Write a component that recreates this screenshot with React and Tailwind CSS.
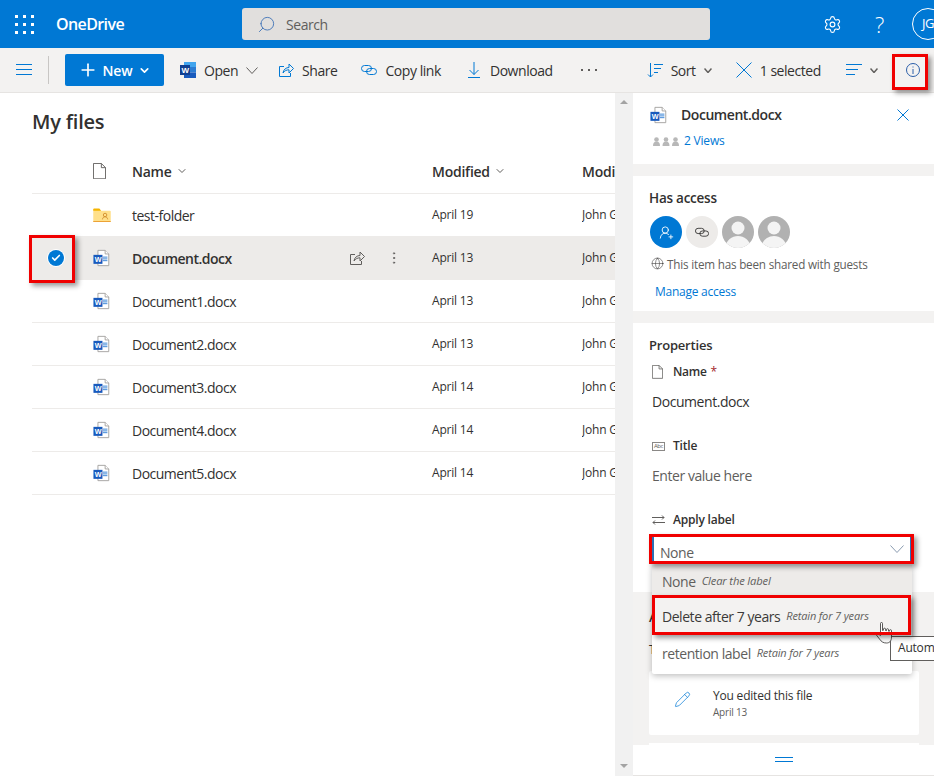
import React from "react";
import { ChevronDown, Plus, Settings, Search, Pencil, Globe, MoreVertical, UserRoundPlus, Check } from "lucide-react";

const WordIcon = ({ className = "" }) => (
  <svg width="18" height="18" viewBox="0 0 20 20" className={className}>
    <path d="M5.500 1.500h8l4 4v13h-12z" fill="#fff" stroke="#a19f9d" />
    <path d="M13.500 1.500v4h4" fill="#fff" stroke="#a19f9d" />
    <rect x="11" y="8.500" width="5" height="1" fill="#2b7cd3" />
    <rect x="11" y="10.500" width="5" height="1" fill="#2b7cd3" />
    <rect x="11" y="12.500" width="5" height="1" fill="#2b7cd3" />
    <rect x="0.500" y="6.500" width="10" height="10" fill="#185abd" />
    <text x="5.500" y="14.500" textAnchor="middle" fontSize="8" fontWeight="700" fill="#fff" fontFamily="Liberation Sans">W</text>
  </svg>
);

const WordLogo = ({ className = "" }) => (
  <svg width="16" height="16" viewBox="0 0 16 16" className={className}>
    <rect x="4" y="0" width="12" height="5" fill="#41a5ee" />
    <rect x="4" y="5" width="12" height="5.500" fill="#2b7cd3" />
    <rect x="4" y="10.500" width="12" height="5.500" fill="#185abd" />
    <rect x="0" y="3" width="10" height="10" fill="#103f91" />
    <text x="5" y="11" textAnchor="middle" fontSize="8" fontWeight="700" fill="#fff" fontFamily="Liberation Sans">W</text>
  </svg>
);

const FolderIcon = () => (
  <svg width="18" height="14" viewBox="0 0 20 16">
    <path d="M0 2a1 1 0 0 1 1-1h6l2 2h10a1 1 0 0 1 1 1v11a1 1 0 0 1-1 1H1a1 1 0 0 1-1-1z" fill="#ffe08a" />
    <path d="M0 1.500a1 1 0 0 1 1-1h6l2 2.500H0z" fill="#f5b400" />
    <rect y="15" width="20" height="1" fill="#ea9a2b" />
    <circle cx="13.500" cy="8" r="2" fill="none" stroke="#d08b2b" />
    <path d="M10.500 13c.3-2 1.500-3 3-3s2.700 1 3 3" fill="none" stroke="#d08b2b" />
  </svg>
);

const FileOutline = ({ size = 16 }) => (
  <svg width={size} height={size * 1.25} viewBox="0 0 14 17.500" fill="none" stroke="#605e5c">
    <path d="M.5.500h8.500l4.500 4.500v12H.5z" />
    <path d="M9 .500V5h4.500" />
  </svg>
);

const ShareIcon = ({ color = "#0078d4", className = "" }) => (
  <svg width="16" height="16" viewBox="0 0 16 16" fill="none" stroke={color} className={className}>
    <path d="M6 4.500H1.500v10h11V11" />
    <path d="M5 11c.5-3.500 3-5.500 6-5.500V2l4.500 4.500L11 11V7.800c-2.500 0-4.500 1-6 3.200z" />
  </svg>
);

const LinkIcon = ({ color = "#0078d4", className = "", w = 16 }) => (
  <svg width={w} height={w * 0.75} viewBox="0 0 16 12" fill="none" stroke={color} className={className}>
    <rect x=".5" y="1.500" width="10" height="6" rx="3" />
    <rect x="5.500" y="4.500" width="10" height="6" rx="3" />
  </svg>
);

const Chev = ({ w = 8, h = 5, color = "#605e5c", sw = 1.5, className = "" }) => (
  <svg width={w} height={h} viewBox={`0 0 ${w} ${h}`} fill="none" stroke={color} strokeWidth={sw} className={className}>
    <path d={`M.5 .5L${w / 2} ${h - 0.5}L${w - 0.5} .5`} />
  </svg>
);

const Cross = ({ size = 16, color = "#0078d4", className = "" }) => (
  <svg width={size} height={size} viewBox={`0 0 ${size} ${size}`} fill="none" stroke={color} className={className}>
    <path d={`M.5 .5L${size - 0.5} ${size - 0.5}M${size - 0.5} .5L.5 ${size - 0.5}`} />
  </svg>
);

const Tool = ({ icon, label, chevron, className = "" }) => (
  <div className={`flex items-center text-[14px] text-[#323130] ${className}`}>
    {icon}
    <span>{label}</span>
    {chevron}
  </div>
);

const files = [
  { name: "test-folder", date: "April 19", folder: true },
  { name: "Document.docx", date: "April 13", selected: true },
  { name: "Document1.docx", date: "April 13" },
  { name: "Document2.docx", date: "April 13" },
  { name: "Document3.docx", date: "April 14" },
  { name: "Document4.docx", date: "April 14" },
  { name: "Document5.docx", date: "April 14" },
];

const Avatar = () => (
  <svg width="32" height="32" viewBox="0 0 32 32">
    <defs>
      <clipPath id="av"><circle cx="16" cy="16" r="16" /></clipPath>
    </defs>
    <circle cx="16" cy="16" r="16" fill="#b1b1b1" />
    <g clipPath="url(#av)">
      <circle cx="16" cy="12" r="6.500" fill="#f4f4f4" />
      <path d="M3 32c1-8 7-12 13-12s12 4 13 12z" fill="#f4f4f4" />
    </g>
  </svg>
);

const RedBox = ({ className }) => (
  <div className={`absolute border-[3px] border-[#f00000] shadow-[3px_3px_5px_rgba(0,0,0,0.4)] pointer-events-none ${className}`} />
);

export default function App() {
  return (
    <div className="relative w-[934px] h-[776px] overflow-hidden bg-white font-['Open_Sans',sans-serif] text-[#323130] flex flex-col tracking-[-0.45px]">
      {/* top bar */}
      <header className="h-12 shrink-0 bg-[#0078d4] flex items-center text-white">
        <div className="w-12 shrink-0 flex justify-center">
          <div className="grid grid-cols-3 gap-[5px]">
            {Array.from({ length: 9 }).map((_, i) => <span key={i} className="w-[3px] h-[3px] bg-white" />)}
          </div>
        </div>
        <span className="ml-2 text-[16px] font-semibold w-[186px] shrink-0 tracking-[-0.6px]">OneDrive</span>
        <div className="w-[468px] h-8 shrink-0 bg-[#e1dfdd] rounded-[3px] flex items-center pl-[15px] text-[14px] text-[#605e5c]">
          <Search size={19} strokeWidth={1.1} className="text-[#3a6fb5] -scale-x-100 mr-[10px]" />
          Search
        </div>
        <Settings size={19} strokeWidth={1.4} className="ml-[113px] shrink-0" />
        <span className="ml-[33px] w-[11px] shrink-0 text-[22px] font-light leading-none">?</span>
        <div className="ml-[26px] w-[32px] h-[32px] shrink-0 rounded-full border border-white flex items-center pl-[9px] text-[13px] overflow-hidden">JG</div>
      </header>

      {/* command bar */}
      <div className="h-[45px] shrink-0 bg-[#f3f2f1] border-b border-[#e6e4e2] flex items-center whitespace-nowrap">
        <svg width="16" height="12" viewBox="0 0 16 12" className="ml-4 shrink-0" stroke="#0078d4"><path d="M0 .500h16M0 5.500h16M0 10.500h16" /></svg>
        <div className="ml-4 w-px h-7 bg-[#c8c6c4] shrink-0" />
        <div className="ml-4 w-[99px] h-8 shrink-0 bg-[#0078d4] rounded-[2px] flex items-center justify-center text-white text-[14px] font-semibold tracking-[-0.2px]">
          <Plus size={20} strokeWidth={2} className="mr-[5px]" />New<ChevronDown size={13} strokeWidth={3} className="ml-[6px]" />
        </div>
        <Tool className="ml-4" icon={<WordLogo className="mr-[8px]" />} label="Open" chevron={<Chev w={12} h={7} sw={1} className="ml-[8px]" />} />
        <Tool className="ml-[20px]" icon={<ShareIcon className="mr-[8px]" />} label="Share" />
        <Tool className="ml-[23px]" icon={<LinkIcon className="mr-[9px]" />} label="Copy link" />
        <Tool className="ml-[27px]" icon={
          <svg width="12" height="16" viewBox="0 0 12 16" fill="none" stroke="#0078d4" className="mr-[10px]"><path d="M6 0v12.500M1.500 8L6 12.500 10.500 8M0 15.500h12" /></svg>
        } label="Download" />
        <div className="ml-[28px] flex gap-[5px]">
          <span className="w-[2px] h-[2px] bg-[#605e5c]" /><span className="w-[2px] h-[2px] bg-[#605e5c]" /><span className="w-[2px] h-[2px] bg-[#605e5c]" />
        </div>
        <Tool className="ml-[50px]" icon={
          <svg width="16" height="16" viewBox="0 0 16 16" fill="none" stroke="#0078d4" className="mr-[8px]"><path d="M3.500 1v14M1 12.500L3.500 15 6 12.500M7 2.500h9M7 6.500h7M7 10.500h4" /></svg>
        } label="Sort" chevron={<Chev className="ml-[8px]" />} />
        <Tool className="ml-[24px]" icon={<Cross className="mr-[8px]" />} label="1 selected" />
        <svg width="16" height="12" viewBox="0 0 16 12" className="ml-[25px] shrink-0" stroke="#0078d4"><path d="M0 .500h16M0 5.500h12M0 10.500h9" /></svg>
        <Chev className="ml-[8px] shrink-0" />
        <svg width="14" height="14" viewBox="0 0 14 14" fill="none" stroke="#2a5ea8" className="ml-[28px] shrink-0">
          <circle cx="7" cy="7" r="6.500" />
          <path d="M7 6v5M7 3.500v1" />
        </svg>
      </div>

      <div className="flex-1 flex min-h-0">
        {/* file list */}
        <main className="w-[615px] shrink-0 pl-8 overflow-hidden tracking-[-0.5px]">
          <h1 className="mt-[15px] text-[20px] font-semibold leading-7 tracking-[-0.2px]">My files</h1>
          <div className="mt-[13px] h-[45px] flex items-center border-b border-[#edebe9] text-[14px] font-semibold tracking-[-0.25px]">
            <div className="ml-[61px] w-[39px]"><FileOutline size={13} /></div>
            <div className="w-[300px] flex items-center">Name<ChevronDown size={12} className="ml-[4px] text-[#605e5c]" /></div>
            <div className="w-[150px] flex items-center">Modified<ChevronDown size={12} className="ml-[4px] text-[#605e5c]" /></div>
            <div className="flex-1 whitespace-nowrap overflow-hidden">Modified By</div>
          </div>
          {files.map((f) => (
            <div key={f.name} className={`h-[43px] flex items-center border-b border-[#edebe9] text-[14px] ${f.selected ? "bg-[#edebe9]" : ""}`}>
              <div className="w-[61px] flex justify-center pr-[13px] shrink-0">
                {f.selected && (
                  <span className="w-4 h-4 rounded-full bg-[#0078d4] ring-1 ring-white flex items-center justify-center">
                    <Check size={10} strokeWidth={4} className="text-white" />
                  </span>
                )}
              </div>
              <div className="w-[39px] shrink-0 flex">{f.folder ? <FolderIcon /> : <WordIcon />}</div>
              <div className={`w-[300px] shrink-0 flex items-center ${f.selected ? "font-semibold" : ""}`}>
                <span className="w-[217px]">{f.name}</span>
                {f.selected && (<>
                  <ShareIcon color="#605e5c" />
                  <MoreVertical size={16} strokeWidth={1.4} className="ml-[21px] text-[#605e5c]" />
                </>)}
              </div>
              <div className="w-[150px] shrink-0 text-[12px] tracking-[-0.2px]">{f.date}</div>
              <div className="flex-1 text-[12px] tracking-[-0.2px] whitespace-nowrap overflow-hidden">John Gruber</div>
            </div>
          ))}
        </main>

        {/* scrollbar */}
        <div className="w-[18px] shrink-0 bg-[#f1f1f1] flex flex-col justify-between items-center pt-[7px] pb-[8px]">
          <span className="w-0 h-0 border-x-[4px] border-x-transparent border-b-[4px] border-b-[#a3a3a3]" />
          <span className="w-0 h-0 border-x-[4px] border-x-transparent border-t-[4px] border-t-[#a3a3a3]" />
        </div>

        {/* details panel */}
        <aside className="flex-1 bg-[#f3f2f1] flex flex-col overflow-hidden">
          <section className="h-[71px] shrink-0 bg-white pl-[17px] pr-[25px] pt-[11px]">
            <div className="flex items-center text-[14px] font-semibold">
              <WordIcon className="mr-[13px]" />
              <span className="flex-1">Document.docx</span>
              <Cross size={12} />
            </div>
            <div className="mt-[7px] ml-[3px] flex items-center text-[12px] tracking-[-0.2px] text-[#0078d4]">
              <svg width="26" height="9" viewBox="0 0 26 9" className="mr-[5px] shrink-0" fill="#b8b8b8">
                <circle cx="3.500" cy="2.500" r="2.300" /><path d="M0 9c0-3 1-4.500 3.500-4.500S7 6 7 9z" />
                <circle cx="13" cy="2.500" r="2.300" /><path d="M9.500 9c0-3 1-4.500 3.500-4.500s3.500 1.500 3.500 4.500z" />
                <circle cx="22.500" cy="2.500" r="2.300" /><path d="M19 9c0-3 1-4.500 3.500-4.500S26 6 26 9z" />
              </svg>
              2 Views
            </div>
          </section>
          <section className="mt-3 h-[135px] shrink-0 bg-white pl-[16px] pt-[12px]">
            <h2 className="text-[13.500px] font-semibold leading-5 tracking-[-0.25px]">Has access</h2>
            <div className="mt-[8px] ml-px flex gap-1">
              <span className="w-8 h-8 rounded-full bg-[#0078d4] flex items-center justify-center"><UserRoundPlus size={15} strokeWidth={1.4} className="text-white" /></span>
              <span className="w-8 h-8 rounded-full bg-[#edebe9] flex items-center justify-center"><LinkIcon color="#323130" w={14} /></span>
              <Avatar />
              <Avatar />
            </div>
            <div className="mt-[8px] flex items-center text-[11.700px] tracking-[-0.2px] text-[#605e5c] whitespace-nowrap">
              <Globe size={13} strokeWidth={1} className="ml-[2px] mr-[3px] -mt-[2px] text-[#323130]" />
              This item has been shared with guests
            </div>
            <a className="block mt-[9px] ml-[6px] text-[12px] tracking-[-0.25px] text-[#0078d4]">Manage access</a>
          </section>
          <section className="mt-3 h-[269px] shrink-0 bg-white pl-[16px] pt-[12px]">
            <h2 className="text-[13px] font-semibold leading-5 tracking-[-0.2px]">Properties</h2>
            <div className="mt-[8px] ml-[3px] flex items-center text-[12px] font-semibold tracking-[-0.3px]">
              <span className="w-[21px]"><FileOutline size={11} /></span>Name<span className="ml-1 font-normal text-[#a4262c]">*</span>
            </div>
            <div className="mt-[11px] ml-[3px] text-[14px] leading-5">Document.docx</div>
            <div className="mt-[25px] ml-[3px] flex items-center text-[12px] font-semibold tracking-[-0.2px]">
              <span className="w-[21px] text-[6px] font-normal text-[#605e5c]"><span className="block w-[13px] h-[9px] border border-[#8a8886] leading-[7px] text-center tracking-[-0.5px]">Abc</span></span>Title
            </div>
            <div className="mt-[11px] ml-[3px] text-[14px] leading-5 text-[#605e5c]">Enter value here</div>
            <div className="mt-[25px] ml-[3px] flex items-center text-[12px] font-semibold tracking-[-0.2px]">
              <svg width="13" height="10" viewBox="0 0 13 10" className="mr-[8px]" fill="none" stroke="#605e5c"><path d="M0 2.500h12M10 .500l2 2-2 2M13 7.500H1M3 5.500l-2 2 2 2" /></svg>
              Apply label
            </div>
          </section>
          <section className="flex-1 min-h-0 pl-[16px] pr-[15px] pt-[15px] relative">
            <h2 className="text-[13px] font-semibold leading-5 tracking-[-0.2px]">Activity</h2>
            <div className="mt-[15px] text-[12px] leading-4 tracking-[-0.2px]">Today</div>
            <div className="mt-[13px] h-[64px] bg-white rounded-[2px] flex pl-[25px] pt-[17px]">
              <Pencil size={17} strokeWidth={1} className="text-[#0078d4] mr-[22px] mt-[3px]" />
              <div className="tracking-[-0.2px]">
                <div className="text-[12px] leading-4">You edited this file</div>
                <div className="text-[10px] mt-[1px] text-[#605e5c]">April 13</div>
              </div>
            </div>
            <div className="mt-2 h-[2px] bg-white" />
            <div className="absolute left-0 right-0 bottom-0 h-[31px] bg-white border-b border-[#e6e4e2] flex flex-col items-center pt-[12px] gap-[3px]">
              <span className="w-[18px] h-px bg-[#0078d4]" />
              <span className="w-[18px] h-px bg-[#0078d4]" />
            </div>
          </section>
        </aside>
      </div>

      {/* label dropdown overlay */}
      <div className="absolute left-[652px] top-[537px] w-[260px] h-[24px] bg-white border-x-2 border-x-[#2a6fb5] flex items-center justify-between pl-[6px] pr-[6px] text-[14px] text-[#605e5c]">
        <span className="mt-[6px]">None</span>
        <Chev w={14} h={8} sw={1} color="#8a9bb0" />
      </div>
      <div className="absolute left-[652px] top-[565px] w-[260px] h-[109px] bg-white rounded-b-[2px] shadow-[0_2px_6px_rgba(0,0,0,0.25)] text-[14px] text-[#605e5c]">
        <div className="h-[32px] bg-[#edebe9] pl-[10px] flex items-center"><span>None</span><i className="ml-[6px] text-[11.200px] tracking-[-0.15px]">Clear the label</i></div>
        <div className="h-[38px] bg-[#f3f2f1] pl-[10px] flex items-center text-[#3b3a39]"><span>Delete after 7 years</span><i className="ml-[6px] text-[11px] tracking-[-0.15px] text-[#605e5c]">Retain for 7 years</i></div>
        <div className="h-[36px] pl-[10px] flex items-center"><span>retention label</span><i className="ml-[6px] text-[11px] tracking-[-0.15px]">Retain for 7 years</i></div>
      </div>
      <div className="absolute left-[890px] top-[636px] w-[60px] h-[25px] bg-white border border-[#605e5c] pl-[7px] text-[12px] tracking-[-0.2px] leading-[22px] whitespace-nowrap">Automatic</div>
      <svg width="18" height="24" viewBox="0 0 18 24" className="absolute left-[875px] top-[622px]" fill="#fff" stroke="#323130" strokeWidth="0.800">
        <path d="M5.500 1.500a1 1 0 0 1 2 0v7l1-.3v-1a1 1 0 0 1 2 0v1.300l1 .2v-1a1 1 0 0 1 2 0v1.500h1v-.5a1 1 0 0 1 2 0V15c0 4-2 6-5 6s-5-1-7-4L1 12.500c-.5-1 .5-2 1.500-1l3 2z" />
      </svg>

      <RedBox className="left-[892px] top-[54px] w-[36px] h-[36px]" />
      <RedBox className="left-[29px] top-[235px] w-[46px] h-[48px]" />
      <RedBox className="left-[649px] top-[534px] w-[265px] h-[30px]" />
      <RedBox className="left-[652px] top-[595px] w-[259px] h-[40px]" />
    </div>
  );
}
